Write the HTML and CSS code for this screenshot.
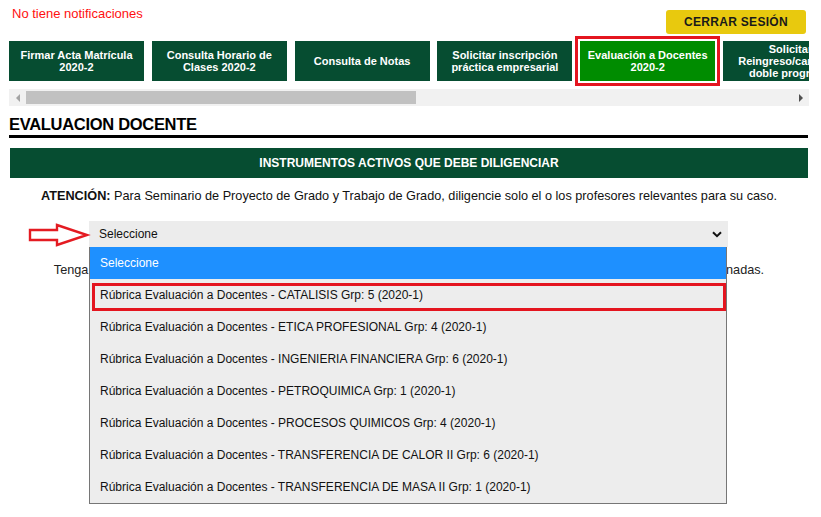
FILE: index.html
```html
<!DOCTYPE html>
<html lang="es">
<head>
<meta charset="utf-8">
<title>Evaluación Docente</title>
<link rel="stylesheet" href="styles.css">
</head>
<body>
<div class="page">
  <div class="topbar">
    <div class="notice">No tiene notificaciones</div>
    <button class="logout">CERRAR SESIÓN</button>
  </div>

  <div class="tabs">
    <div class="tab">Firmar Acta Matrícula 2020-2</div>
    <div class="tab">Consulta Horario de Clases 2020-2</div>
    <div class="tab">Consulta de Notas</div>
    <div class="tab">Solicitar inscripción práctica empresarial</div>
    <div class="tab tab-active">Evaluación a Docentes 2020-2</div>
    <div class="tab">Solicitar Reingreso/cambio a doble programa</div>
    <div class="tab">Solicitudes Académicas</div>
  </div>
  <div class="hscroll">
    <div class="hs-arrow"><span class="tri-left"></span></div>
    <div class="hs-track"><div class="hs-thumb"></div></div>
    <div class="hs-arrow"><span class="tri-right"></span></div>
  </div>

  <h1 class="title">EVALUACION DOCENTE</h1>
  <div class="banner">INSTRUMENTOS ACTIVOS QUE DEBE DILIGENCIAR</div>
  <p class="attention"><b>ATENCIÓN:</b> Para Seminario de Proyecto de Grado y Trabajo de Grado, diligencie solo el o los profesores relevantes para su caso.</p>

  <div class="select-wrap">
    <svg class="pointer" width="64" height="26" viewBox="0 0 64 26">
      <polygon points="3,8 30,8 30,3 60,13 30,23 30,18 3,18" fill="none" stroke="#e41b22" stroke-width="2.4" stroke-linejoin="miter"/>
    </svg>
    <div class="select">
      <span>Seleccione</span>
      <svg class="chev" width="10" height="7" viewBox="0 0 10 7"><path d="M1 1.2 L5 5.2 L9 1.2" fill="none" stroke="#111" stroke-width="2"/></svg>
    </div>
    <ul class="options">
      <li class="opt opt-sel">Seleccione</li>
      <li class="opt opt-mark">Rúbrica Evaluación a Docentes - CATALISIS Grp: 5 (2020-1)</li>
      <li class="opt">Rúbrica Evaluación a Docentes - ETICA PROFESIONAL Grp: 4 (2020-1)</li>
      <li class="opt">Rúbrica Evaluación a Docentes - INGENIERIA FINANCIERA Grp: 6 (2020-1)</li>
      <li class="opt">Rúbrica Evaluación a Docentes - PETROQUIMICA Grp: 1 (2020-1)</li>
      <li class="opt">Rúbrica Evaluación a Docentes - PROCESOS QUIMICOS Grp: 4 (2020-1)</li>
      <li class="opt">Rúbrica Evaluación a Docentes - TRANSFERENCIA DE CALOR II Grp: 6 (2020-1)</li>
      <li class="opt">Rúbrica Evaluación a Docentes - TRANSFERENCIA DE MASA II Grp: 1 (2020-1)</li>
    </ul>
  </div>
  <p class="note">Tenga en cuenta que debe diligenciar la evaluación de cada uno de los docentes de las asignaturas que ya tienen terminadas.</p>
</div>
</body>
</html>
```

FILE: styles.css
```css
* { box-sizing: border-box; }
html, body { margin: 0; padding: 0; background: #fff; }
body {
  font-family: "Liberation Sans", Arial, sans-serif;
  color: #000;
  min-height: 517px;
}
.page {
  width: 800px;
  margin-left: 9px;
  min-height: 517px;
}
.topbar {
  display: flex;
  justify-content: space-between;
  align-items: flex-start;
  height: 36px;
}
.notice {
  color: #ff1010;
  font-size: 13px;
  line-height: 15px;
  padding: 6px 0 0 3px;
}
.logout {
  margin: 10px 3px 0 0;
  width: 140px;
  height: 24px;
  border: none;
  border-radius: 3px;
  background: #e8c90e;
  color: #1a1a1a;
  font-family: "Liberation Sans", Arial, sans-serif;
  font-weight: bold;
  font-size: 12px;
  letter-spacing: 0.3px;
  padding: 0;
}
.tabs {
  display: flex;
  gap: 7.8px;
  overflow: hidden;
  padding: 5px 0 8px 0;
}
.tab {
  flex: 0 0 135px;
  height: 40px;
  background: #064d31;
  color: #fff;
  font-weight: bold;
  font-size: 11px;
  line-height: 12px;
  text-align: center;
  display: flex;
  align-items: center;
  justify-content: center;
  padding: 0 3px;
}
.tab-active {
  background: #008c00;
  outline: 3px solid #e4151f;
  outline-offset: 2px;
}
.hscroll {
  display: flex;
  height: 17px;
  background: #f1f1f1;
}
.hs-arrow {
  flex: 0 0 17px;
  display: flex;
  align-items: center;
  justify-content: center;
}
.tri-left {
  width: 0; height: 0;
  border-top: 4px solid transparent;
  border-bottom: 4px solid transparent;
  border-right: 4px solid #a3a3a3;
}
.tri-right {
  width: 0; height: 0;
  border-top: 4px solid transparent;
  border-bottom: 4px solid transparent;
  border-left: 4px solid #505050;
}
.hs-track {
  flex: 1;
  padding: 2px 0;
}
.hs-thumb {
  width: 390px;
  height: 13px;
  background: #c1c1c1;
}
.title {
  margin: 8px 0 0 0;
  font-size: 16.5px;
  letter-spacing: -0.3px;
  line-height: 20px;
  font-weight: bold;
  padding-bottom: 1px;
  border-bottom: 3px solid #000;
  width: 799px;
}
.banner {
  margin: 10px 1px 0 1px;
  height: 30px;
  line-height: 30px;
  background: #064d31;
  color: #fff;
  font-weight: bold;
  font-size: 12px;
  text-align: center;
}
.attention {
  margin: 11px 0 0 0;
  font-size: 12.7px;
  line-height: 15px;
  text-align: center;
  color: #111;
}
.select-wrap {
  position: relative;
  margin: 17px 0 0 80px;
  width: 639px;
}
.pointer {
  position: absolute;
  left: -62px;
  top: 1px;
}
.select {
  height: 26px;
  background: #ececec;
  display: flex;
  align-items: center;
  justify-content: space-between;
  padding: 0 6px 0 10px;
  font-size: 12px;
  color: #111;
}
.options {
  position: absolute;
  left: 0;
  top: 26px;
  width: 638px;
  margin: 0;
  padding: 0;
  list-style: none;
  background: #ededed;
  border: 1px solid #767676;
  border-top: none;
  z-index: 2;
}
.opt {
  position: relative;
  height: 32px;
  line-height: 32px;
  padding-left: 10px;
  font-size: 12px;
  color: #111;
  white-space: nowrap;
}
.opt-sel {
  background: #1e90ff;
  color: #fff;
}
.opt-mark::after {
  content: "";
  position: absolute;
  left: 2px;
  right: 0;
  top: 4px;
  bottom: 0;
  border: 3px solid #e4151f;
}
.note {
  margin: 16px 0 0 0;
  font-size: 12.7px;
  line-height: 15px;
  text-align: center;
  color: #222;
}
```
